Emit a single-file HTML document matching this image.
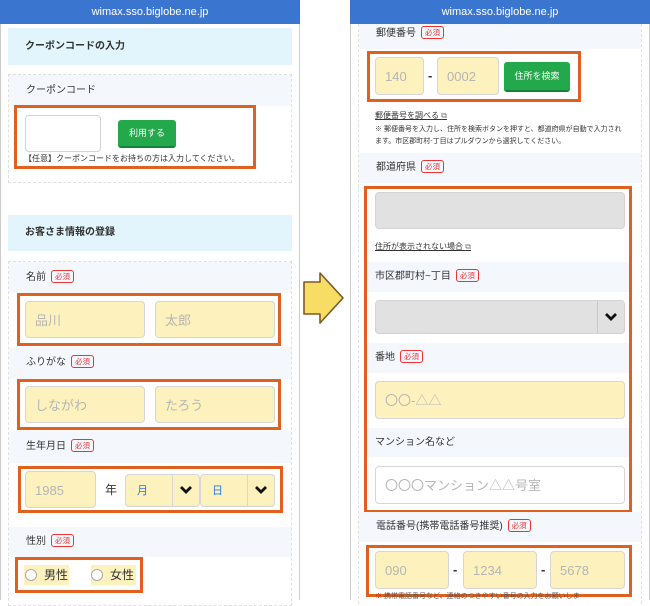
<!DOCTYPE html><html><head><meta charset="utf-8"><style>
*{margin:0;padding:0;box-sizing:border-box}
body{width:650px;height:600px;background:#fff;position:relative;overflow:hidden;font-family:"Liberation Sans","Noto Sans CJK JP",sans-serif;color:#333}
.a{position:absolute}
.hdr{background:#3a76d0;color:#fff;font-size:11px;text-align:center;line-height:24px;height:24px}
.ph{border-left:1px solid #ccc;border-right:1px solid #ccc;height:600px;top:0}
.ttl{background:#e2f5fc;font-size:10px;font-weight:bold;padding-left:17px}
.lb{background:#f4f8fd;font-size:10px;padding-left:17px}
.req{display:inline-block;border:1px solid #e33;color:#e33;border-radius:3px;font-size:7.5px;line-height:11px;padding:0 3px;margin-left:5px;vertical-align:1px}
.ob{border:3px solid #e2601d}
.in{border:1px solid #d6d6d6;border-radius:4px;background:#fdf1bd;color:#b5b5b5;font-size:13px;padding-left:9px}
.btn{background:#23a84b;border-radius:3px;color:#fff;font-size:9px;text-align:center;border-bottom:2px solid #168237}
.card{border:1px dashed #e0e0e0}
</style></head><body>
<div class="a ph" style="left:0;width:300px"></div>
<div class="a hdr" style="left:0;top:0;width:300px">wimax.sso.biglobe.ne.jp</div>
<div class="a ttl" style="left:8px;top:28px;width:284px;height:37px;line-height:37px">クーポンコードの入力</div>
<div class="a card" style="left:8px;top:74px;width:284px;height:109px"></div>
<div class="a lb" style="left:9px;top:75px;width:282px;height:31px;line-height:31px">クーポンコード</div>
<div class="a ob" style="left:14px;top:105px;width:242px;height:64px"></div>
<div class="a" style="left:25px;top:115px;width:76px;height:37px;border:1px solid #d3d3d3;border-radius:4px;background:#fff"></div>
<div class="a btn" style="left:118px;top:120px;width:58px;height:28px;line-height:26px">利用する</div>
<div class="a" style="left:24px;top:153px;font-size:8px;white-space:nowrap">【任意】クーポンコードをお持ちの方は入力してください。</div>
<div class="a ttl" style="left:8px;top:215px;width:284px;height:36px;line-height:36px">お客さま情報の登録</div>
<div class="a card" style="left:8px;top:261px;width:284px;height:345px"></div>
<div class="a lb" style="left:9px;top:262px;width:282px;height:31px;line-height:31px">名前<span class="req">必須</span></div>
<div class="a ob" style="left:17px;top:293px;width:264px;height:53px"></div>
<div class="a in" style="left:25px;top:301px;width:120px;height:37px;line-height:37px">品川</div>
<div class="a in" style="left:155px;top:301px;width:120px;height:37px;line-height:37px">太郎</div>
<div class="a lb" style="left:9px;top:347px;width:282px;height:32px;line-height:32px">ふりがな<span class="req">必須</span></div>
<div class="a ob" style="left:17px;top:379px;width:264px;height:51px"></div>
<div class="a in" style="left:25px;top:386px;width:120px;height:37px;line-height:37px">しながわ</div>
<div class="a in" style="left:155px;top:386px;width:120px;height:37px;line-height:37px">たろう</div>
<div class="a lb" style="left:9px;top:431px;width:282px;height:32px;line-height:32px">生年月日<span class="req">必須</span></div>
<div class="a ob" style="left:18px;top:466px;width:265px;height:47px"></div>
<div class="a in" style="left:25px;top:471px;width:71px;height:37px;line-height:37px">1985</div>
<div class="a" style="left:105px;top:481px;font-size:12px">年</div>
<div class="a in" style="left:125px;top:474px;width:75px;height:33px;line-height:33px;color:#2a7be0;font-size:11px;padding-left:11px">月</div>
<div class="a" style="left:172px;top:474px;width:1px;height:33px;background:#d6d6d6"></div>
<div class="a in" style="left:200px;top:474px;width:75px;height:33px;line-height:33px;color:#2a7be0;font-size:11px;padding-left:11px">日</div>
<div class="a" style="left:247px;top:474px;width:1px;height:33px;background:#d6d6d6"></div>
<svg class="a" style="left:179px;top:485px" width="14" height="10"><path d="M2 2l5 5 5-5" stroke="#111" stroke-width="2.8" fill="none"/></svg>
<svg class="a" style="left:254px;top:485px" width="14" height="10"><path d="M2 2l5 5 5-5" stroke="#111" stroke-width="2.8" fill="none"/></svg>
<div class="a lb" style="left:9px;top:527px;width:282px;height:30px;line-height:30px">性別<span class="req">必須</span></div>
<div class="a ob" style="left:15px;top:557px;width:128px;height:36px"></div>
<div class="a" style="left:24px;top:565px;width:45px;height:20px;background:#fdf1bd"></div>
<div class="a" style="left:91px;top:565px;width:45px;height:20px;background:#fdf1bd"></div>
<div class="a" style="left:25px;top:569px;width:12px;height:12px;border-radius:50%;border:1px solid #aaa;background:#fff"></div>
<div class="a" style="left:91px;top:569px;width:12px;height:12px;border-radius:50%;border:1px solid #aaa;background:#fff"></div>
<div class="a" style="left:44px;top:566px;font-size:12px">男性</div>
<div class="a" style="left:110px;top:566px;font-size:12px">女性</div>
<svg class="a" style="left:300px;top:270px" width="50" height="56"><path d="M4 12h16V3l23 25-23 25v-9H4z" fill="#f7dd64" stroke="#7a5a2a" stroke-width="1.6" stroke-linejoin="round"/></svg>
<div class="a ph" style="left:350px;width:300px"></div>
<div class="a hdr" style="left:350px;top:0;width:300px">wimax.sso.biglobe.ne.jp</div>
<div class="a" style="left:358px;top:24px;width:284px;height:580px;border-left:1px dashed #e0e0e0;border-right:1px dashed #e0e0e0"></div>
<div class="a lb" style="left:359px;top:24px;width:282px;height:25px;line-height:20px">郵便番号<span class="req">必須</span></div>
<div class="a ob" style="left:367px;top:51px;width:214px;height:51px"></div>
<div class="a in" style="left:375px;top:57px;width:49px;height:38px;line-height:38px">140</div>
<div class="a" style="left:428px;top:68px;font-size:13px;font-weight:bold">-</div>
<div class="a in" style="left:437px;top:57px;width:62px;height:38px;line-height:38px">0002</div>
<div class="a btn" style="left:504px;top:62px;width:66px;height:30px;line-height:28px">住所を検索</div>
<div class="a" style="left:375px;top:110px;font-size:8px;text-decoration:underline">郵便番号を調べる <span style="text-decoration:none;color:#777">⧉</span></div>
<div class="a" style="left:375px;top:124px;font-size:7px;line-height:12px;width:250px">※ 郵便番号を入力し、住所を検索ボタンを押すと、都道府県が自動で入力されます。市区郡町村-丁目はプルダウンから選択してください。</div>
<div class="a lb" style="left:359px;top:153px;width:282px;height:30px;line-height:30px">都道府県<span class="req">必須</span></div>
<div class="a ob" style="left:364px;top:186px;width:268px;height:327px"></div>
<div class="a" style="left:375px;top:192px;width:250px;height:37px;background:#e1e1e1;border:1px solid #d3d3d3;border-radius:4px"></div>
<div class="a" style="left:375px;top:241px;font-size:8px;text-decoration:underline">住所が表示されない場合 <span style="text-decoration:none;color:#777">⧉</span></div>
<div class="a lb" style="left:367px;top:262px;width:262px;height:30px;line-height:30px;padding-left:8px">市区郡町村~丁目<span class="req">必須</span></div>
<div class="a" style="left:375px;top:300px;width:250px;height:34px;background:#e1e1e1;border:1px solid #d3d3d3;border-radius:4px"></div>
<div class="a" style="left:597px;top:301px;width:1px;height:32px;background:#c8c8c8"></div>
<svg class="a" style="left:604px;top:312px" width="14" height="10"><path d="M2 2l5 5 5-5" stroke="#111" stroke-width="2.8" fill="none"/></svg>
<div class="a lb" style="left:367px;top:343px;width:262px;height:30px;line-height:30px;padding-left:8px">番地<span class="req">必須</span></div>
<div class="a in" style="left:375px;top:381px;width:250px;height:38px;line-height:38px">〇〇-△△</div>
<div class="a lb" style="left:367px;top:428px;width:262px;height:29px;line-height:29px;padding-left:8px">マンション名など</div>
<div class="a in" style="left:375px;top:466px;width:250px;height:38px;line-height:38px;background:#fff">〇〇〇マンション△△号室</div>
<div class="a lb" style="left:359px;top:512px;width:282px;height:30px;line-height:30px">電話番号(携帯電話番号推奨)<span class="req">必須</span></div>
<div class="a ob" style="left:366px;top:545px;width:266px;height:52px"></div>
<div class="a in" style="left:375px;top:551px;width:74px;height:38px;line-height:38px">090</div>
<div class="a" style="left:453px;top:562px;font-size:13px;font-weight:bold">-</div>
<div class="a in" style="left:463px;top:551px;width:74px;height:38px;line-height:38px">1234</div>
<div class="a" style="left:541px;top:562px;font-size:13px;font-weight:bold">-</div>
<div class="a in" style="left:550px;top:551px;width:75px;height:38px;line-height:38px">5678</div>
<div class="a" style="left:375px;top:591px;font-size:7px;color:#555;white-space:nowrap">※ 携帯電話番号など、連絡のつきやすい番号の入力をお願いしま</div>
</body></html>
